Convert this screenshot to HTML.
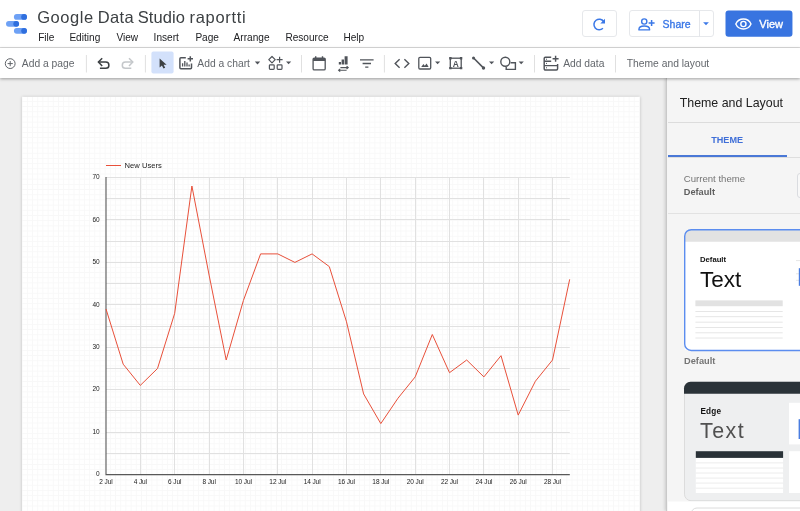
<!DOCTYPE html>
<html lang="fi">
<head>
<meta charset="utf-8">
<title>Google Data Studio raportti</title>
<style>
*{box-sizing:border-box;margin:0;padding:0}
html,body{width:800px;height:511px;overflow:hidden;background:#eeeeee;font-family:"Liberation Sans",sans-serif;color:#3c4043}
.abs{position:absolute}
#page,#panel,#header,#toolbar{will-change:transform}
#header{position:absolute;left:0;top:0;width:800px;height:48px;background:#fff;border-bottom:1px solid #dcdcdc}
#title{position:absolute;left:37.2px;top:7px;font-size:16.5px;line-height:20px;color:#3c4043;white-space:nowrap;letter-spacing:0.33px}
.menu{position:absolute;top:31.3px;font-size:10.1px;line-height:14px;color:#202124;white-space:nowrap}
#toolbar{position:absolute;left:0;top:48px;width:800px;height:30px;background:#fff;box-shadow:0 1px 3px rgba(0,0,0,.35)}
.tb{position:absolute;top:8px;font-size:11px;line-height:14px;color:#5f6368;white-space:nowrap}
.sep{position:absolute;top:6px;width:1px;height:19px;background:#e0e0e0}
.btn{position:absolute;top:10px;height:27px;border:1px solid #e6e8eb;border-radius:3px;background:#fff}
#canvas{position:absolute;left:0;top:78px;width:667px;height:433px;background:#eeeeee;z-index:0}
#page{position:absolute;left:22px;top:97px;width:618px;height:420px;background-color:#fff;box-shadow:0 0 3px rgba(0,0,0,.2);
 background-image:linear-gradient(to right,#f8f8f8 1px,transparent 1px),linear-gradient(to bottom,#f8f8f8 1px,transparent 1px);background-size:5.2px 5.2px;background-position:-0.3px -1.3px}
#panel{position:absolute;left:666px;top:78px;width:134px;height:433px;background:#f5f5f5;border-left:1px solid #c9c9c9;box-shadow:-1px 0 3px rgba(0,0,0,.16)}
#pin{position:absolute;left:1px;top:0;width:133px;height:433px}
#toolbar,#header{z-index:5}
#title .w{position:absolute;top:0}
svg text{font-family:"Liberation Sans",sans-serif}
</style>
</head>
<body>
<div id="canvas"></div>
<div class="abs" style="left:22px;top:96px;width:618px;height:1px;background:rgba(255,255,255,.4)"></div>
<div id="page">
<svg class="abs" style="left:0;top:-1px" width="618" height="420" viewBox="22 96 618 420">
 <g stroke="#e1e1e1" stroke-width="1" fill="none">
  <path d="M106.0 453.5H569.8M106.0 432.5H569.8M106.0 410.5H569.8M106.0 389.5H569.8M106.0 368.5H569.8M106.0 347.5H569.8M106.0 326.5H569.8M106.0 304.5H569.8M106.0 283.5H569.8M106.0 262.5H569.8M106.0 241.5H569.8M106.0 219.5H569.8M106.0 198.5H569.8M106.0 177.5H569.8"/>
  <path d="M140.5 177.5V474.6M174.5 177.5V474.6M209.5 177.5V474.6M243.5 177.5V474.6M277.5 177.5V474.6M312.5 177.5V474.6M346.5 177.5V474.6M380.5 177.5V474.6M415.5 177.5V474.6M449.5 177.5V474.6M483.5 177.5V474.6M518.5 177.5V474.6M552.5 177.5V474.6"/>
 </g>
 <path d="M106.0 177.0V474.6H569.8" stroke="#595959" stroke-width="1.1" fill="none"/>
 <path d="M106.0 309.0 L123.2 364.2 L140.3 385.4 L157.5 368.5 L174.7 313.3 L191.9 186.0 L209.1 275.1 L226.2 360.0 L243.4 300.5 L260.6 253.9 L277.8 253.9 L294.9 262.4 L312.1 253.9 L329.3 266.6 L346.5 321.8 L363.6 393.9 L380.8 423.6 L398.0 398.2 L415.2 376.9 L432.3 334.5 L449.5 372.7 L466.7 360.0 L483.9 376.9 L501.0 355.7 L518.2 415.1 L535.4 381.2 L552.5 360.0 L569.7 279.3" stroke="#e8503a" stroke-width="1" fill="none" stroke-linejoin="round"/>
 <path d="M106 165.5H121" stroke="#e8503a" stroke-width="1"/>
 <text x="124.6" y="168.3" font-size="7.6" fill="#222">New Users</text>
 <g font-size="6.5" fill="#222" text-anchor="end"><text x="99.7" y="179.2">70</text><text x="99.7" y="221.6">60</text><text x="99.7" y="264.1">50</text><text x="99.7" y="306.5">40</text><text x="99.7" y="348.9">30</text><text x="99.7" y="391.4">20</text><text x="99.7" y="433.8">10</text><text x="99.7" y="476.2">0</text></g>
 <g font-size="6.5" fill="#222" text-anchor="middle" letter-spacing="-0.08"><text x="106.0" y="483.9">2 Jul</text><text x="140.3" y="483.9">4 Jul</text><text x="174.7" y="483.9">6 Jul</text><text x="209.1" y="483.9">8 Jul</text><text x="243.4" y="483.9">10 Jul</text><text x="277.8" y="483.9">12 Jul</text><text x="312.1" y="483.9">14 Jul</text><text x="346.5" y="483.9">16 Jul</text><text x="380.8" y="483.9">18 Jul</text><text x="415.2" y="483.9">20 Jul</text><text x="449.5" y="483.9">22 Jul</text><text x="483.9" y="483.9">24 Jul</text><text x="518.2" y="483.9">26 Jul</text><text x="552.5" y="483.9">28 Jul</text></g>
</svg>
</div>
<div id="panel"><div id="pin">
 <div class="abs" style="left:11.7px;top:17px;font-size:12.4px;line-height:16px;color:#212121;white-space:nowrap" id="ptitle">Theme and Layout</div>
 <div class="abs" style="left:0;top:44px;width:133px;height:1px;background:#dcdcdc"></div>
 <div class="abs" id="tabt" style="left:43.2px;top:56px;font-size:9.1px;line-height:12px;color:#3f6fd8;font-weight:bold;white-space:nowrap">THEME</div>
 <div class="abs" style="left:0;top:78.6px;width:133px;height:1px;background:#dedede"></div>
 <div class="abs" style="left:0;top:77.3px;width:118.8px;height:2px;background:#4a78d6"></div>
 <div class="abs" id="cur1" style="left:15.8px;top:95px;font-size:9.6px;line-height:12px;color:#757575;white-space:nowrap">Current theme</div>
 <div class="abs" id="cur2" style="left:15.8px;top:108px;font-size:9.2px;line-height:12px;color:#5f5f5f;font-weight:bold;white-space:nowrap">Default</div>
 <div class="abs" style="left:128.6px;top:95px;width:12px;height:25.4px;border:1px solid #dadce0;border-radius:3px;background:#f8f8f8"></div>
 <div class="abs" style="left:0;top:135.2px;width:133px;height:1px;background:#e2e2e2"></div>
 <!-- cards -->
 <svg class="abs" style="left:0;top:0" width="133" height="433" viewBox="668 78 133 433">
  <!-- card 1 -->
  <path d="M684.7 350V236.2A6.5 6.5 0 0 1 691.2 229.7H801V350.5Z" fill="#fff"/>
  <path d="M684.7 241.8V236.2A6.5 6.5 0 0 1 691.2 229.7H801V241.8Z" fill="#e2e2e2"/>
  <rect x="684.7" y="229.7" width="140" height="120.8" rx="6.5" fill="none" stroke="#5b8def" stroke-width="1.4"/>
  <rect x="695.4" y="300.4" width="87.3" height="5.8" fill="#e2e2e2"/>
  <path d="M695.4 311.5H782.7M695.4 316.7H782.7M695.4 322.2H782.7M695.4 327.5H782.7M695.4 332.8H782.7M695.4 338H782.7" stroke="#e6e6e6" stroke-width="1"/>
  <path d="M796 260.6H801M796 273.8H801M796 280.3H801" stroke="#e6e6e6" stroke-width="1"/>
  <rect x="798.8" y="268.2" width="3" height="17.6" fill="#4a7de0"/>
  <text x="700" y="262.4" font-size="7.7" font-weight="bold" fill="#111">Default</text>
  <text x="700" y="287.1" font-size="22.5" fill="#111">Text</text>
  <text x="684" y="364.1" font-size="9.25" font-weight="bold" fill="#757575">Default</text>
  <!-- card 2 -->
  <rect x="684.5" y="382.3" width="140" height="118.4" rx="6.5" fill="#eeeff0" stroke="#dcdcdc" stroke-width="1"/>
  <path d="M684 393.8V388.3A6.5 6.5 0 0 1 690.5 381.8H801V393.8Z" fill="#2a3238"/>
  <rect x="695.8" y="451.2" width="87.3" height="41.8" fill="#fff"/>
  <path d="M695.8 462.9H783.1M695.8 468.0H783.1M695.8 473.0H783.1M695.8 478.1H783.1M695.8 483.1H783.1M695.8 488.2H783.1" stroke="#ececec" stroke-width="1"/>
  <rect x="695.8" y="451.2" width="87.3" height="6.7" fill="#2a3238"/>
  <rect x="789" y="402.8" width="12" height="41.6" fill="#fff"/>
  <rect x="789" y="451.2" width="12" height="41.8" fill="#fff"/>
  <rect x="798.6" y="419.2" width="3" height="19.8" fill="#4a7de0"/>
  <text x="700.4" y="414.2" font-size="8.2" font-weight="bold" fill="#111" letter-spacing=".2">Edge</text>
  <text x="700" y="438.4" font-size="21.4" fill="#505050" letter-spacing="1.5">Text</text>
  <!-- next section -->
  <rect x="667" y="501.5" width="134" height="12" fill="#fff"/>
  <rect x="691" y="508" width="140" height="20" rx="6" fill="#fff" stroke="#dcdcdc" stroke-width="1"/>
 </svg>
</div></div>
<div id="header">
 <svg class="abs" style="left:0;top:0" width="40" height="48" viewBox="0 0 40 48">
  <g fill="#6ea1f5"><rect x="13.9" y="14" width="13.1" height="5.8" rx="2.9"/><rect x="6" y="20.9" width="13.1" height="5.8" rx="2.9"/><rect x="13.9" y="27.9" width="13.1" height="5.8" rx="2.9"/></g>
  <g fill="#2f6fde"><circle cx="24.1" cy="16.9" r="2.9"/><circle cx="16.2" cy="23.8" r="2.9"/><circle cx="24.1" cy="30.8" r="2.9"/></g>
 </svg>
 <div id="title"><span style="letter-spacing:.55px">Google</span> <span class="w" style="left:60.6px">Data</span> <span class="w" style="left:100.6px;letter-spacing:.06px">Studio</span> <span class="w" style="left:152.4px;letter-spacing:.67px">raportti</span></div>
 <div class="menu" style="left:38.2px">File</div>
 <div class="menu" style="left:69.4px">Editing</div>
 <div class="menu" style="left:116.4px">View</div>
 <div class="menu" style="left:153.6px">Insert</div>
 <div class="menu" style="left:195.4px">Page</div>
 <div class="menu" style="left:233.6px">Arrange</div>
 <div class="menu" style="left:285.4px">Resource</div>
 <div class="menu" style="left:343.4px">Help</div>
 <!-- refresh -->
 <div class="btn" style="left:581.5px;width:35.5px"></div>
 <svg class="abs" style="left:592px;top:17px" width="16" height="14" viewBox="0 0 16 14"><path d="M11.66 4.52A5.3 5.3 0 1 0 10.93 11.27" fill="none" stroke="#3b78e7" stroke-width="1.5"/><path d="M13 1.7V6.5H8.3Z" fill="#3b78e7"/></svg>
 <!-- share -->
 <div class="btn" style="left:629px;width:84.5px"></div>
 <div class="abs" style="left:698.6px;top:10.5px;width:1px;height:26px;background:#e4e6ea"></div>
 <svg class="abs" style="left:637px;top:17px" width="20" height="16" viewBox="0 0 20 16"><circle cx="7.25" cy="4.5" r="2.6" fill="none" stroke="#3b78e7" stroke-width="1.4"/><path d="M1.95 12.9V12.3C1.95 10 5 9.05 7.25 9.05S12.55 10 12.55 12.3V12.9Z" fill="none" stroke="#3b78e7" stroke-width="1.4" stroke-linejoin="round"/><path d="M14.6 2.9V8.9M11.6 5.9H17.6" stroke="#3b78e7" stroke-width="1.5"/></svg>
 <div class="abs" id="share" style="left:662.6px;top:16.9px;font-size:10.5px;line-height:14px;color:#3b78e7;-webkit-text-stroke:0.35px #3b78e7;white-space:nowrap">Share</div>
 <svg class="abs" style="left:702px;top:21px" width="8" height="6" viewBox="0 0 8 6"><path d="M1.1 1.2H6.9L4 4.3Z" fill="#3b78e7"/></svg>
 <!-- view -->
 <svg class="abs" style="left:720px;top:5px" width="80" height="38" viewBox="720 5 80 38"><rect x="725.5" y="10.4" width="66.95" height="26.3" rx="3" fill="#3874e0"/></svg>
 <svg class="abs" style="left:734px;top:17px" width="19" height="14" viewBox="0 0 19 14"><path d="M1.8 7C3.2 3.9 6 2 9.4 2S15.6 3.9 17 7C15.6 10.1 12.8 12 9.4 12S3.2 10.1 1.8 7Z" fill="none" stroke="#fff" stroke-width="1.4"/><circle cx="9.4" cy="7" r="2.6" fill="none" stroke="#fff" stroke-width="1.4"/></svg>
 <div class="abs" id="viewb" style="left:759.3px;top:17px;font-size:11px;line-height:14px;color:#fff;-webkit-text-stroke:0.35px #fff;white-space:nowrap">View</div>
</div>
<div id="toolbar">
<svg class="abs" style="left:0;top:0" width="800" height="30" viewBox="0 48 800 30">
 <g fill="none" stroke="#5f6368" stroke-width="1">
  <circle cx="10.2" cy="63.6" r="4.9"/><path d="M7.6 63.6H12.8M10.2 61V66.2"/>
 </g>
 <g stroke="#e0e0e0" stroke-width="1"><path d="M86.4 55V72.5M145.4 55V72.5M301.5 55V72.5M384.4 55V72.5M534.5 55V72.5M615.5 55V72.5"/></g>
 <!-- undo / redo -->
 <g fill="none" stroke="#3c4043" stroke-width="1.5"><path d="M98.6 62.1H105.8A3.1 3.1 0 0 1 105.8 68.3H99.9"/><path d="M102.2 58.2L98.4 62.1L102.2 66"/></g>
 <g fill="none" stroke="#c4c7ca" stroke-width="1.5"><path d="M132.6 62.1H125.4A3.1 3.1 0 0 0 125.4 68.3H131.3"/><path d="M129 58.2L132.8 62.1L129 66"/></g>
 <!-- select -->
 <rect x="151.4" y="51.6" width="22.2" height="22" rx="2" fill="#d3e1fb"/>
 <path d="M159.6 58.4V67.6L161.9 65.4L163.5 68.6L165.2 67.8L163.6 64.7H166.6Z" fill="#3c4043"/>
 <!-- add chart -->
 <g fill="none" stroke="#50545a" stroke-width="1.5"><path d="M185.8 57.7H180.9A1 1 0 0 0 179.9 58.7V67.8A1 1 0 0 0 180.9 68.8H190.5A1 1 0 0 0 191.5 67.8V63.4"/><path d="M190.3 56.2V61.5M187.6 58.8H193"/></g>
 <g stroke="#50545a" stroke-width="1.3"><path d="M182.6 63.2V66.6M184.8 61V66.6M187 62.4V66.6M189.1 64.6V66.6"/></g>
 <path d="M254.8 61.4H260.2L257.5 64.4Z" fill="#50545a"/>
 <!-- community -->
 <g fill="none" stroke="#50545a" stroke-width="1.2"><path d="M272 56.5L275.2 59.7L272 62.9L268.8 59.7Z" stroke-linejoin="round"/><path d="M279.6 56.7V62.7M276.6 59.7H282.6"/><rect x="269.4" y="64.8" width="4.8" height="4.6" rx="0.8"/><rect x="277.2" y="64.8" width="4.8" height="4.6" rx="0.8"/></g>
 <path d="M286 61.4H291.2L288.6 64.2Z" fill="#50545a"/>
 <!-- calendar -->
 <g fill="none" stroke="#50545a" stroke-width="1.3"><rect x="313.1" y="58.1" width="12.1" height="11.8" rx="1.2"/></g>
 <path d="M313.1 58H325.2V61H313.1Z M315 56.2H316.4V58H315Z M321.8 56.2H323.2V58H321.8Z" fill="#50545a"/>
 <!-- data control -->
 <path d="M338.8 62H341V64.6H338.8Z M341.6 59.4H344V64.6H341.6Z M344.6 56.3H347.6V64.6H344.6Z" fill="#50545a"/>
 <g fill="none" stroke="#50545a" stroke-width="1.1"><path d="M340.4 67.6H348.2M346.6 66.2L348.2 67.6L346.6 69"/><path d="M346.6 70.3H338.6M340.2 68.9L338.6 70.3L340.2 71.7"/></g>
 <!-- filter -->
 <g stroke="#50545a" stroke-width="1.3"><path d="M360 59.8H373.6M362.6 63.5H371M365.2 67.2H368.4"/></g>
 <!-- code -->
 <g fill="none" stroke="#50545a" stroke-width="1.4"><path d="M399.6 59.3L395.2 63.5L399.6 67.7"/><path d="M404.4 59.3L408.8 63.5L404.4 67.7"/></g>
 <!-- image -->
 <rect x="418.8" y="57.3" width="11.9" height="11.7" rx="1.2" fill="none" stroke="#50545a" stroke-width="1.3"/>
 <path d="M421.2 66.9L423.4 64.1L424.8 65.7L426.6 63.5L428.6 66.9Z" fill="#50545a"/>
 <path d="M435 61.4H440.2L437.6 64.2Z" fill="#50545a"/>
 <!-- text box -->
 <rect x="450.3" y="58.2" width="10.9" height="10" fill="none" stroke="#50545a" stroke-width="1.3"/>
 <path d="M449.2 57.1H451.6V59.5H449.2Z M459.9 57.1H462.3V59.5H459.9Z M449.2 66.9H451.6V69.3H449.2Z M459.9 66.9H462.3V69.3H459.9Z" fill="#50545a"/>
 <text x="455.75" y="66.5" font-size="8.4" font-weight="bold" text-anchor="middle" fill="#50545a">A</text>
 <!-- line -->
 <path d="M473.6 58L483.4 67.9" stroke="#50545a" stroke-width="1.6"/><circle cx="473.5" cy="58" r="1.5" fill="#50545a"/><circle cx="483.5" cy="68" r="1.7" fill="#50545a"/>
 <path d="M489 61.4H494.2L491.6 64.2Z" fill="#50545a"/>
 <!-- shape -->
 <g fill="none" stroke="#50545a" stroke-width="1.4"><circle cx="505.3" cy="61.7" r="4.5"/><path d="M510.6 62.8H515.4V69.4H506.2V67"/></g>
 <path d="M518.6 61.4H523.8L521.2 64.2Z" fill="#50545a"/>
 <!-- add data -->
 <g fill="none" stroke="#50545a" stroke-width="1.45"><path d="M551.2 57.2H545.4A1.2 1.2 0 0 0 544.2 58.4V68.8A1.2 1.2 0 0 0 545.4 70H556.4A1.2 1.2 0 0 0 557.6 68.8V64"/><path d="M544.2 61.2H551.2M544.2 65.6H557.6"/><path d="M555.6 55.8V61.8M552.6 58.8H558.6"/></g>
 <g fill="#50545a"><rect x="546" y="58.7" width="1" height="1"/><rect x="546" y="62.9" width="1" height="1"/><rect x="546" y="67.3" width="1" height="1"/></g>
 <g font-size="10.3" fill="#63676c">
  <text id="t1" x="21.8" y="66.6">Add a page</text>
  <text id="t2" x="197.3" y="66.6">Add a chart</text>
  <text id="t3" x="563.2" y="66.6">Add data</text>
  <text id="t4" x="626.8" y="66.6">Theme and layout</text>
 </g>
</svg>
</div>
</body>
</html>
